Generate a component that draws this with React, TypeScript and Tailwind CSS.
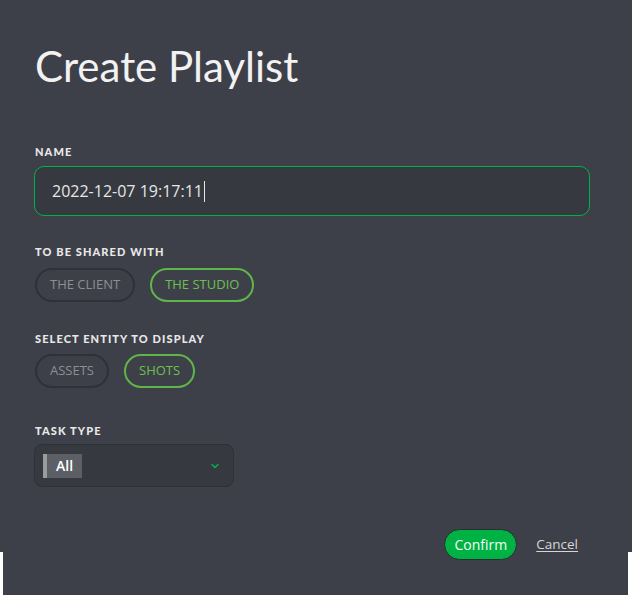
import { ChevronDown } from "lucide-react";

function Label({ children }: { children: string }) {
  return (
    <div className="text-[11px] font-black tracking-[0.1em] text-[#e8e8e8] uppercase leading-none [font-family:Lato,sans-serif]">
      {children}
    </div>
  );
}

function Toggle({ label, active }: { label: string; active?: boolean }) {
  return (
    <button
      className={
        active
          ? "h-[34px] rounded-full border-2 border-[#5fb54a] px-[13px] text-[13px] font-medium text-[#6cc04f]"
          : "h-[34px] rounded-full border-2 border-[#2e3138] px-[13px] text-[13px] font-medium text-[#8c8f94]"
      }
    >
      {label}
    </button>
  );
}

export default function App() {
  return (
    <div className="relative h-[595px] w-[632px] overflow-hidden bg-[#3e4049] [font-family:'Open_Sans',sans-serif]">
      <div className="flex flex-col px-[35px] pt-[38px]">
        {/* Title */}
        <h1 className="text-[42px] leading-[56px] text-[#f2f2f2] [font-family:Lato,sans-serif]">Create Playlist</h1>

        {/* Name */}
        <div className="mt-[52px]">
          <Label>Name</Label>
          <div className="mt-[9px] -ml-px flex h-[50px] w-[556px] items-center rounded-[10px] border border-[#00b242] bg-[#363940] pl-[17px] text-[16px] text-[#e6e6e6]">
            2022-12-07 19:17:11
            <span className="ml-px inline-block h-[21px] w-px bg-[#e6e6e6]" />
          </div>
        </div>

        {/* Shared with */}
        <div className="mt-[30px]">
          <Label>To be shared with</Label>
          <div className="mt-[11px] flex gap-[15px]">
            <Toggle label="THE CLIENT" />
            <Toggle label="THE STUDIO" active />
          </div>
        </div>

        {/* Entity */}
        <div className="mt-[31px]">
          <Label>Select entity to display</Label>
          <div className="mt-[10px] flex gap-[15px]">
            <Toggle label="ASSETS" />
            <Toggle label="SHOTS" active />
          </div>
        </div>

        {/* Task type */}
        <div className="mt-[37px]">
          <Label>Task type</Label>
          <div className="mt-[8px] -ml-px flex h-[43px] w-[200px] items-center justify-between rounded-[8px] border border-[#2e3138] bg-[#363940] pl-[8px] pr-[12px]">
            <div className="flex h-[24px] items-stretch bg-[#5c5f66]">
              <span className="w-[4px] bg-[#9b9b9b]" />
              <span className="flex items-center px-[9px] text-[14px] font-semibold text-white">All</span>
            </div>
            <ChevronDown className="h-[12px] w-[12px] text-[#00b242]" strokeWidth={3} />
          </div>
        </div>

        {/* Actions */}
        <div className="mt-[42px] flex items-center justify-end gap-[19px] pr-[19px]">
          <button className="h-[31px] rounded-full border border-[#2a2d33] bg-[#00b244] px-[9px] text-[14px] text-[#f0fff4]">
            Confirm
          </button>
          <a href="#" className="text-[13.5px] text-[#d6d6d6] underline underline-offset-2">
            Cancel
          </a>
        </div>
      </div>

      {/* page edges showing below the dialog */}
      <div className="absolute bottom-0 left-0 h-[43px] w-[3px] bg-white" />
      <div className="absolute bottom-0 right-0 h-[43px] w-[4px] bg-white" />
    </div>
  );
}
